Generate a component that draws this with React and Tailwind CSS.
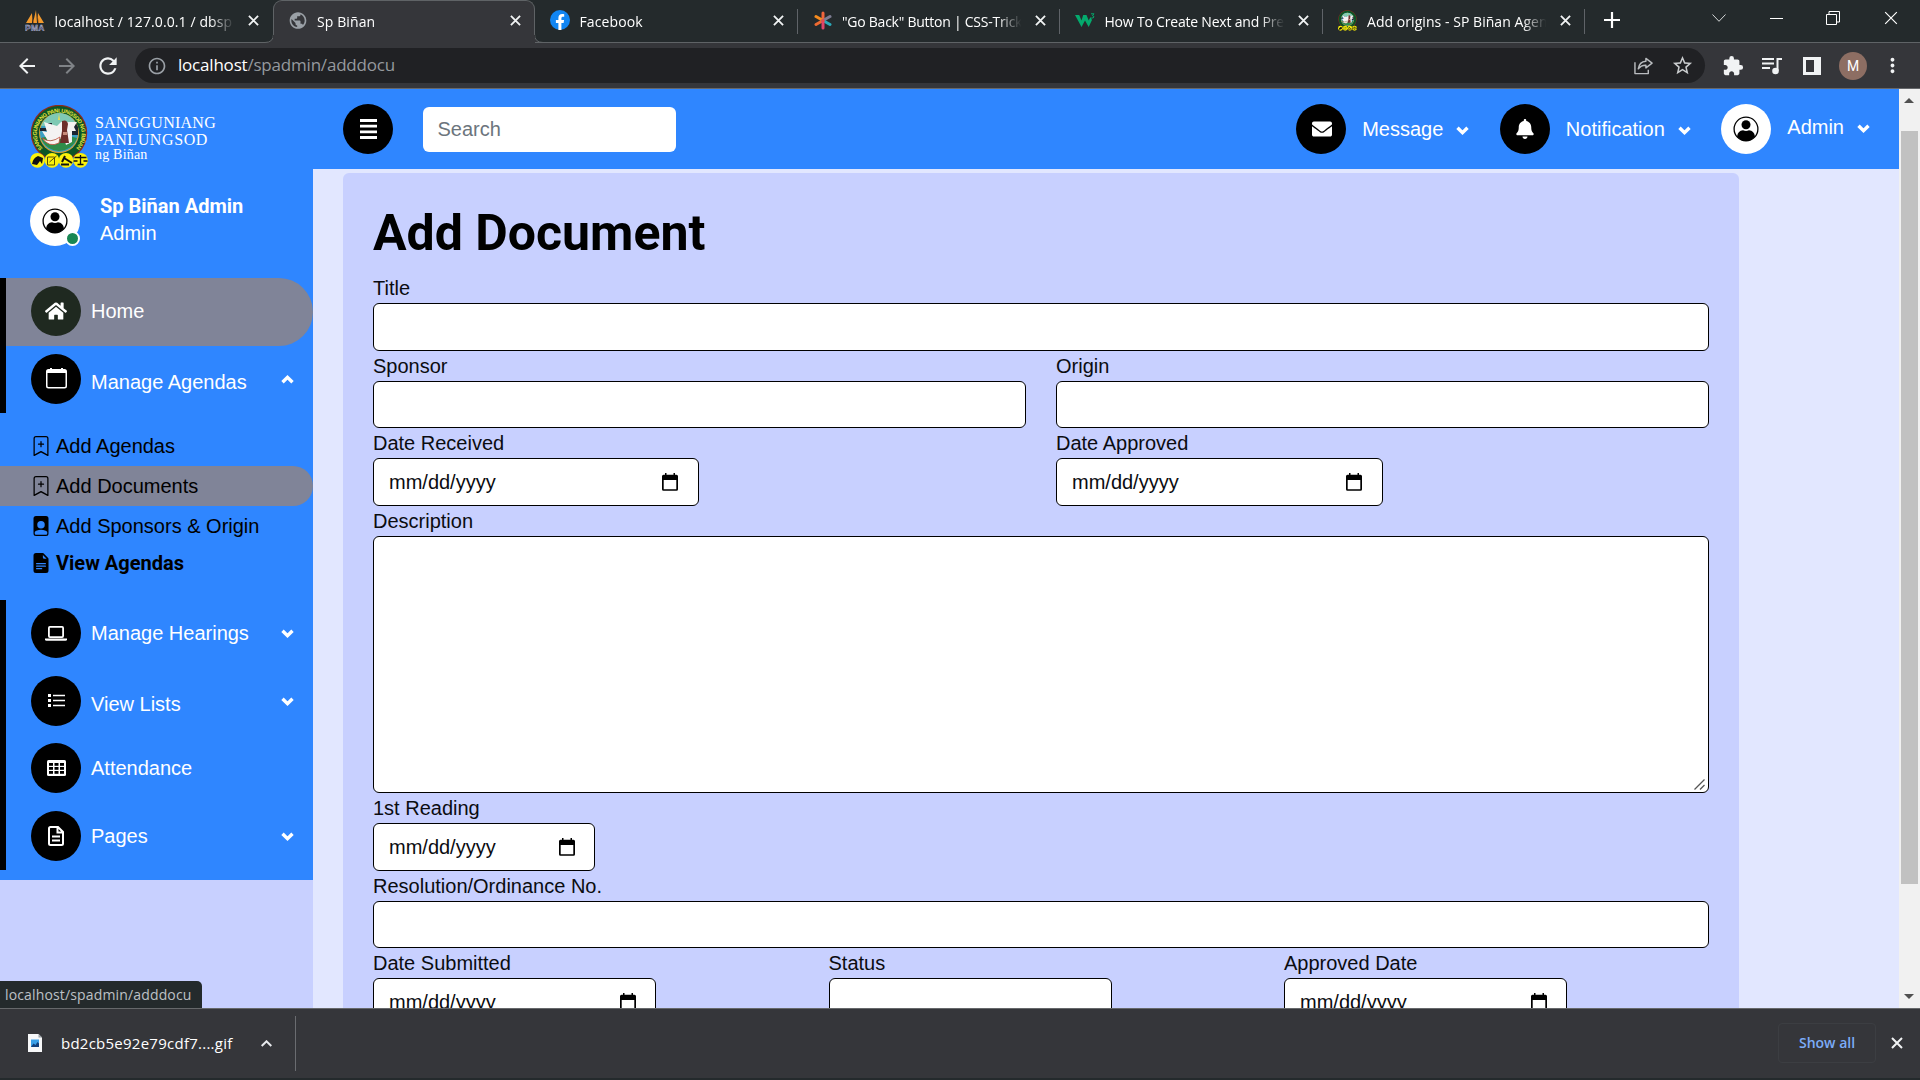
import React from "react";
import { BsBookmarkPlus, BsFilePersonFill, BsFileEarmarkTextFill } from "react-icons/bs";
import { FaHome, FaEnvelope, FaBell } from "react-icons/fa";
import {
  MdArrowBack, MdArrowForward, MdRefresh, MdInfoOutline, MdStarBorder, MdExtension, MdMoreVert, MdPublic,
} from "react-icons/md";

const ui = "font-['Open_Sans','Noto_Sans',sans-serif]";

function Cross({ size = 13, w = 2, className = "" }) {
  return (
    <svg width={size} height={size} viewBox="0 0 12 12" className={"shrink-0 " + className}>
      <path d="M1 1L11 11M11 1L1 11" stroke="currentColor" strokeWidth={w} fill="none" />
    </svg>
  );
}

function Chevron({ up, className = "" }) {
  return (
    <svg width="13" height="9" viewBox="0 0 13 9" className={"shrink-0 " + className}>
      <path d={up ? "M1.500 7.300L6.500 2.400l5 4.900" : "M1.500 1.700l5 4.900 5-4.900"} fill="none" stroke="currentColor" strokeWidth="3.400" />
    </svg>
  );
}

function Seal({ w, h, detail }) {
  return (
    <svg width={w} height={h} viewBox="0 0 58 63" className="shrink-0">
      <circle cx="29" cy="28" r="28.2" fill="#8e2a1c" />
      <circle cx="29" cy="28" r="27" fill="#0c5526" />
      <circle cx="29" cy="28" r="20" fill="#d8a13a" />
      <circle cx="29" cy="28" r="19" fill="#3a9fc4" />
      <path d="M11 21a19 19 0 0 1 36 0z" fill="#7fc9b4" />
      <path d="M10 23h8v-5h4v8h-12zM41 18h5l2 4v8h-8z" fill="#1c2430" />
      <path d="M11 33q18 -6 36 0a19 19 0 0 1 -36 0z" fill="#2f8d4a" />
      <path d="M14 17l13 4 4 -4h16l-3 5 2 4h-4v11l-6 3 -2 -7 -16 3 -6 -10 5 1z" fill="#f4f2f2" />
      <path d="M12 33q8 6 18 -1l-1 6q-10 5 -17 -5z" fill="#f8f4ee" stroke="#bb3a2a" strokeWidth=".7" />
      <path d="M32 16q5 -2 6 3l-1 6 2 13h-9l2 -12z" fill="#6e2f2a" />
      <path d="M33 27h4v3h-4z" fill="#c98b7a" />
      <path d="M29 9l1 6h-2z" fill="#f1e04b" />
      {detail && (
        <>
          <defs>
            <path id="ring" d="M12.8 43.5A22.4 21.4 0 1 1 45.500 43.500" />
          </defs>
          <text fontSize="5.6" fontWeight="700" fill="#e9e33a" className="font-['Liberation_Sans',sans-serif]">
            <textPath href="#ring" textLength="100">SANGGUNIANG PANLUNGSOD NG BIÑAN</textPath>
          </text>
        </>
      )}
      {[7.5, 22, 36, 50.5].map((x) => (
        <circle key={x} cx={x} cy="55.3" r="7.4" fill="#fbf20c" />
      ))}
      <path d="M2 59q1 -6 6 -8l5 2 -1 6 -2 -3 -3 4z" fill="#111" />
      <path d="M17.500 52h7v8h-7zM19.500 57l7 -6" fill="none" stroke="#55500a" />
      <path d="M31 59.500h8M35 51l-3 6M34 53l8 5" fill="none" stroke="#111" strokeWidth="2" />
      <path d="M50.500 50v9M47.500 59.500h6M44.500 52.500h12M43.500 56h4zM53.500 56h4z" fill="none" stroke="#111" strokeWidth="1.3" />
    </svg>
  );
}

const favicons = {
  pma: (
    <svg width="20" height="21" viewBox="0 0 20 21">
      <path d="M1 13L7 3v10zM8 13L11 0l1 13zM13 13V3l6 10z" fill="#f39a2d" />
      <path d="M7 4l1 9h1zM12 2l1 11h1z" fill="#c46a10" />
      <text x="0" y="20.500" fontSize="8.500" fontWeight="700" fill="#4a4c78" stroke="#c3c4dc" strokeWidth=".4" textLength="19.500" className="font-['Liberation_Sans',sans-serif]">PMA</text>
    </svg>
  ),
  fb: (
    <svg width="20" height="20" viewBox="0 0 20 20">
      <circle cx="10" cy="10" r="10" fill="#1185f2" />
      <path d="M8.400 20v-7H5.900v-3h2.500V7.900c0-2.600 1.500-3.900 3.700-3.900.8 0 1.700.1 2.100.2v2.500h-1.300c-1.100 0-1.500.7-1.500 1.400V10h2.700l-.5 3h-2.200v7z" fill="#fff" />
    </svg>
  ),
  css: (
    <svg width="18" height="19" viewBox="0 0 18 19" strokeWidth="3" strokeLinecap="round">
      <path d="M9 9.500V2" stroke="#f0653c" />
      <path d="M9 9.500L2 5.500" stroke="#f58b1e" />
      <path d="M9 9.500L2 13.500" stroke="#ee6a31" />
      <path d="M9 9.500L16 5.500" stroke="#7d7c92" />
      <path d="M9 9.500L16 13.500" stroke="#2ba8b8" />
      <path d="M9 9.500V17" stroke="#e0436b" />
      <circle cx="9" cy="9.500" r="1.500" fill="#e84a4a" stroke="none" />
    </svg>
  ),
  w3: (
    <svg width="20" height="14" viewBox="0 0 20 14">
      <path d="M0 2h4.200l2.300 5.500L8.200 2h3.300l2.200 5.500L15.500 4l1.500 3-3.300 7L10 7.500 6.500 14z" fill="#04aa6d" />
      <path d="M16 .8h3L17.400 2.600q1.600 .2 1.500 1.400 -.2 1.400 -2.700 1" fill="none" stroke="#04aa6d" />
    </svg>
  ),
};

function Tab({ icon, title, tracking, active, divider }) {
  return (
    <div
      className={
        "relative flex h-[43px] w-[262.5px] shrink-0 items-center " +
        (active
          ? "rounded-t-[9px] border border-b-0 border-[#5f6366] bg-[#35363a] pb-[4px] pl-[14px]"
          : "border-b border-[#5f6366] pb-[2px] pl-[15px]")
      }
    >
      <div className="flex w-5 shrink-0 justify-center">{icon}</div>
      <div className="ml-[9.5px] w-[183px] overflow-hidden mask-r-from-85% mask-r-to-98%">
        <span className={"whitespace-nowrap text-[14px] leading-5 text-white " + tracking}>{title}</span>
      </div>
      <Cross size={11} className="ml-[10px] text-[#f1f3f4]" />
      {divider && <div className="absolute top-[9px] right-0 h-[25px] w-px bg-[#5f6368]" />}
      {active && (
        <>
          <svg width="9" height="9" viewBox="0 0 9 9" className="absolute bottom-0 -left-[9px]">
            <path d="M0 9V8.500Q8.500 8.500 8.500 0H9v9z" fill="#35363a" />
            <path d="M0 8.500Q8.500 8.500 8.500 0" fill="none" stroke="#5f6366" />
          </svg>
          <svg width="9" height="9" viewBox="0 0 9 9" className="absolute -right-[9px] bottom-0">
            <path d="M9 9V8.500Q.5 8.500 .5 0H0v9z" fill="#35363a" />
            <path d="M9 8.500Q.5 8.500 .5 0" fill="none" stroke="#5f6366" />
          </svg>
          <div className="absolute bottom-0 -left-px h-2 w-px bg-[#35363a]" />
          <div className="absolute -right-px bottom-0 h-2 w-px bg-[#35363a]" />
        </>
      )}
    </div>
  );
}

function Share() {
  return (
    <svg width="20" height="18" viewBox="0 0 21 18" fill="none" stroke="#b9bcbf" strokeWidth="1.500" strokeLinejoin="round">
      <path d="M1 5v12h14v-4" />
      <path d="M12.500 1l6.500 5-6.500 5V8.200Q7.500 8 4.500 12 5.500 4.500 12.500 4z" />
    </svg>
  );
}

function Browser() {
  return (
    <div className={ui}>
      <div className="flex h-[43px] bg-[#242a2c]">
        <div className="w-[10px] border-b border-[#5f6366]" />
        <Tab icon={favicons.pma} title="localhost / 127.0.0.1 / dbsp" tracking="tracking-[0.1px]" />
        <Tab icon={<MdPublic size={21} color="#9aa0a6" />} title="Sp Biñan" tracking="tracking-[0.1px]" active />
        <Tab icon={favicons.fb} title="Facebook" tracking="tracking-[0.1px]" divider />
        <Tab icon={favicons.css} title={'"Go Back" Button | CSS-Tricks'} tracking="tracking-[-0.25px]" divider />
        <Tab icon={favicons.w3} title="How To Create Next and Previous" tracking="tracking-[-0.2px]" divider />
        <Tab icon={<Seal w={19} h={21} />} title="Add origins - SP Biñan Agenda" tracking="tracking-[0.05px]" divider />
        <div className="flex flex-1 items-center border-b border-[#5f6366] pb-[2px] pl-[19px]">
          <svg width="16" height="16" viewBox="0 0 16 16" stroke="#fff" strokeWidth="2.200"><path d="M8 0v16M0 8h16" /></svg>
          <div className="mb-1 ml-[92px] flex flex-1 items-center justify-between pr-[22px]">
            <svg width="14" height="8" viewBox="0 0 14 8" fill="none" stroke="#d5d7d8"><path d="M.5 .5L7 7.300 13.500 .5" /></svg>
            <div className="h-px w-[13px] bg-white" />
            <svg width="14" height="14" viewBox="0 0 14 14" fill="none" stroke="#fff"><path d="M.5 3.500h10v10H.5zM3 3.500V.5h10.500V11H10.500" /></svg>
            <Cross size={14} w={1} className="text-white" />
          </div>
        </div>
      </div>
      <div className="flex h-[46px] items-center border-b border-[#66686b] bg-[#35363a] pl-[15px] text-[#f1f3f4]">
        <MdArrowBack size={24} />
        <MdArrowForward size={24} className="ml-4 text-[#808387]" />
        <MdRefresh size={26} className="ml-4" />
        <div className="ml-[14px] flex h-[35px] w-[1570px] items-center rounded-full bg-[#202124] pl-3">
          <MdInfoOutline size={20} className="text-[#9aa0a6]" />
          <div className="ml-[11px] pb-0.5 text-[17px] tracking-[-0.2px] text-white">
            localhost<span className="text-[#95999e]">/spadmin/adddocu</span>
          </div>
          <div className="mr-[11px] ml-auto flex items-center gap-[17px]">
            <Share />
            <MdStarBorder size={23} className="text-[#c9ccce]" />
          </div>
        </div>
        <MdExtension size={22} className="ml-[17px]" />
        <svg width="20" height="18" viewBox="0 0 20 18" className="ml-[18px]" fill="none" stroke="currentColor" strokeWidth="2">
          <path d="M0 2h12M0 6.500h12M0 11h8M15.500 14V2H20" /><circle cx="13.500" cy="14" r="2.300" fill="currentColor" />
        </svg>
        <svg width="18" height="18" viewBox="0 0 18 18" className="ml-[21px]"><path fill="currentColor" fillRule="evenodd" d="M0 0h18v18H0zM3 3v12h8V3z" /></svg>
        <div className="ml-[18px] flex size-7 items-center justify-center rounded-full bg-[#8d6e63] font-['Roboto',sans-serif] text-sm text-white">M</div>
        <MdMoreVert size={23} className="ml-[14px]" />
      </div>
    </div>
  );
}

function Round({ children, className = "bg-black text-white" }) {
  return <div className={"flex size-[50px] shrink-0 items-center justify-center rounded-full " + className}>{children}</div>;
}

function PersonGlyph() {
  return (
    <svg width="26" height="26" viewBox="0 0 26 26">
      <circle cx="13" cy="13" r="11.900" fill="none" stroke="#000" strokeWidth="1.300" />
      <circle cx="13" cy="8.700" r="4.500" />
      <path d="M4 20.500Q5 14.500 10 14.300q3 1.500 6 0 5 .2 6 6.200Q18.500 25 13 25t-9-4.500z" />
    </svg>
  );
}

function MenuGlyph() {
  return (
    <svg width="17" height="20" viewBox="0 0 17 20" fill="#fff">
      <path d="M0 0h17v3H0zM0 5.700h17v2.800H0zM0 11.400h17v2.800H0zM0 17h17v3H0z" />
    </svg>
  );
}

function CalendarGlyph() {
  return (
    <svg width="21" height="21" viewBox="0 0 21 21" className="ml-px">
      <path d="M4 0h2v1h9V0h2v1h1.500Q21 1 21 3.500v14.500q0 2.500-2.500 2.500h-16Q0 20.500 0 18V3.500Q0 1 2.500 1H4zM1.500 5v13q0 1 1 1h16q1 0 1-1V5z" fill="#fff" fillRule="evenodd" />
    </svg>
  );
}

function LaptopGlyph() {
  return (
    <svg width="22" height="15" viewBox="0 0 22 15">
      <rect x="3.900" y=".9" width="14.200" height="10.200" rx="1" fill="none" stroke="#fff" strokeWidth="1.800" />
      <path d="M0 12.500h22v.8q0 1.500-1.500 1.500h-19Q0 14.800 0 13.300z" fill="#fff" />
    </svg>
  );
}

function ListGlyph() {
  return (
    <svg width="17" height="13" viewBox="0 0 17 13" fill="#fff">
      <path d="M0 0h3v3H0zM0 5h3v3H0zM0 10h3v3H0zM5 .8h12v1.400H5zM5 5.800h12v1.400H5zM5 10.800h12v1.400H5z" />
    </svg>
  );
}

function TableGlyph() {
  return (
    <svg width="19" height="16" viewBox="0 0 19 16">
      <rect width="19" height="16" rx="1.500" fill="#fff" />
      {[3, 7, 11].map((y) => [2, 7.500, 13].map((x) => <rect key={x + "-" + y} x={x} y={y} width="4" height="2.800" fill="#000" />))}
    </svg>
  );
}

function PageGlyph() {
  return (
    <svg width="16" height="20" viewBox="0 0 16 20" fill="none" stroke="#fff" strokeWidth="2">
      <path d="M2.500 1h7.500l5 5v11.500q0 1.500-1.500 1.500h-11Q1 19 1 17.500v-15Q1 1 2.500 1zM9.500 1v5.500H15M4 10.500h8M4 14.500h8" />
    </svg>
  );
}

function NavRow({ icon, label, shift = "", chevron, className = "pt-2", round }) {
  return (
    <div className={"flex h-[67.5px] items-start border-l-[6px] border-black pr-[19px] pl-[25px] text-white " + className}>
      <Round className={round}>{icon}</Round>
      <span className={"ml-[10px] flex-1 leading-[50px] " + shift}>{label}</span>
      {chevron && <Chevron up={chevron === "up"} className="mt-[21px]" />}
    </div>
  );
}

function SubRow({ icon, children, className = "" }) {
  return (
    <div className={"flex h-10 items-center pl-[31px] text-black " + className}>
      {icon}
      <span className="ml-[5px]">{children}</span>
    </div>
  );
}

function Sidebar() {
  return (
    <aside className="w-[313px] shrink-0 bg-[#c8d0ff]">
      <div className="h-[791px] bg-[#2f86ff]">
        <div className="flex h-[79px] pt-4 pl-[30px]">
          <Seal w={58} h={63} detail />
          <div className="mt-[9px] ml-[7px] font-['Liberation_Serif',serif] text-[16px] leading-[17px] text-white">
            <div className="tracking-[0.25px]">SANGGUNIANG</div>
            <div className="tracking-[0.6px]">PANLUNGSOD</div>
            <div className="text-[14px] leading-[13px] tracking-[0.2px]">ng Biñan</div>
          </div>
        </div>
        <div className="mt-7 flex h-[50px] pl-[30px]">
          <div className="relative">
            <Round className="bg-white text-black"><PersonGlyph /></Round>
            <div className="absolute right-0 bottom-0 size-[15px] rounded-full border-2 border-white bg-[#198754]" />
          </div>
          <div className="-mt-[3px] ml-5 text-white">
            <div className="font-['Roboto',sans-serif] leading-[27px] font-bold">Sp Biñan Admin</div>
            <div className="leading-[27px]">Admin</div>
          </div>
        </div>
        <div className="mt-8 h-[135px]">
          <NavRow className="rounded-r-full bg-[#808498] pt-2" round="bg-[#1f2920] text-white" icon={<FaHome size={22} />} label="Home" />
          <NavRow icon={<CalendarGlyph />} label="Manage Agendas" shift="pt-[3px]" chevron="up" />
        </div>
        <div className="h-[187px] pt-[13px]">
          <SubRow icon={<BsBookmarkPlus size={20} />}>Add Agendas</SubRow>
          <SubRow icon={<BsBookmarkPlus size={20} />} className="rounded-r-full bg-[#808498]">Add Documents</SubRow>
          <SubRow icon={<BsFilePersonFill size={20} />}>Add Sponsors &amp; Origin</SubRow>
          <SubRow icon={<BsFileEarmarkTextFill size={20} />} className="-mt-[3px] font-['Roboto',sans-serif] font-bold">View Agendas</SubRow>
        </div>
        <NavRow icon={<LaptopGlyph />} label="Manage Hearings" chevron="down" />
        <NavRow icon={<ListGlyph />} label="View Lists" shift="pt-[3px]" chevron="down" />
        <NavRow icon={<TableGlyph />} label="Attendance" />
        <NavRow icon={<PageGlyph />} label="Pages" chevron="down" />
      </div>
    </aside>
  );
}

function TopItem({ label, className = "", round, children, up = "" }) {
  return (
    <div className={"flex items-center " + className}>
      <Round className={round}>{children}</Round>
      <div className={"ml-4 flex items-center " + up}>
        <span>{label}</span>
        <Chevron className="mt-[2px] ml-[13px]" />
      </div>
    </div>
  );
}

function Box({ className = "" }) {
  return <div className={"rounded-[6px] border border-black bg-white " + className} />;
}

function DateBox({ className = "pr-[19px]" }) {
  return (
    <div className={"flex h-12 items-center justify-between rounded-[6px] border border-black bg-white pl-[15px] " + className}>
      <span>mm/dd/yyyy</span>
      <svg width="16" height="18" viewBox="0 0 16 18">
        <path d="M3 0h1.500v1.800h7V0H13v1.800h1.500Q16 1.800 16 3.300v13q0 1.500-1.500 1.500h-13Q0 17.800 0 16.300v-13Q0 1.800 1.500 1.800H3zM1.700 7v9.200h12.600V7z" fill="#000" fillRule="evenodd" />
      </svg>
    </div>
  );
}

function Field({ label, children, className = "" }) {
  return (
    <div className={className}>
      <div className="h-[30px] leading-[30px]">{label}</div>
      {children}
    </div>
  );
}

function Form() {
  return (
    <section className="mt-1 ml-[30px] h-[900px] w-[1396px] rounded-[6px] bg-[#c8d0ff] px-[30px] text-[#0b0c10]">
      <h1 className="h-[100px] pt-[30px] font-['Roboto',sans-serif] text-[50px] leading-[60px] font-bold text-black">Add Document</h1>
      <Field label="Title"><Box className="h-12" /></Field>
      <div className="grid grid-cols-2 gap-x-[30px]">
        <Field label="Sponsor"><Box className="h-[47px]" /></Field>
        <Field label="Origin"><Box className="h-[47px]" /></Field>
        <Field label="Date Received"><DateBox className="w-[326px] pr-5" /></Field>
        <Field label="Date Approved"><DateBox className="w-[327px] pr-5" /></Field>
      </div>
      <Field label="Description">
        <div className="flex h-[257px] items-end justify-end rounded-[6px] border border-black bg-white pr-[3px] pb-[2px]">
          <svg width="11" height="11" viewBox="0 0 11 11" stroke="#555" strokeWidth="1.300"><path d="M.5 10.500l10-10M6 10.500l4.500-4.500" /></svg>
        </div>
      </Field>
      <Field label="1st Reading"><DateBox className="w-[222px] pr-[19px]" /></Field>
      <Field label="Resolution/Ordinance No."><Box className="h-[47px]" /></Field>
      <div className="flex gap-[172.5px]">
        <Field label="Date Submitted" className="w-[283px]"><DateBox /></Field>
        <Field label="Status" className="w-[283px]"><Box className="h-12" /></Field>
        <Field label="Approved Date" className="w-[283px]"><DateBox /></Field>
      </div>
    </section>
  );
}

function Main() {
  return (
    <div className="flex-1 bg-[#e2e7ff]">
      <header className="flex h-20 items-center bg-[#2f86ff] text-white">
        <Round className="ml-[30px] bg-black text-white"><MenuGlyph /></Round>
        <div className="ml-[29.5px] flex h-[45px] w-[253px] items-center rounded-[6px] bg-white pl-[15px] text-[#6c757d]">Search</div>
        <div className="ml-auto flex items-center pr-[29px]">
          <TopItem label="Message" round="bg-black text-white"><FaEnvelope size={20} className="ml-[2px]" /></TopItem>
          <TopItem label="Notification" round="bg-black text-white" className="ml-[30.5px]"><FaBell size={20} /></TopItem>
          <TopItem label="Admin" round="bg-white text-black" className="ml-[30.5px]" up="-mt-[4px]"><PersonGlyph /></TopItem>
        </div>
      </header>
      <Form />
    </div>
  );
}

function Scrollbar() {
  return (
    <div className="flex w-[21px] shrink-0 flex-col items-center bg-[#f1f1f1] pr-px">
      <svg width="10" height="5" viewBox="0 0 10 5" className="mt-[9px]"><path d="M0 5L5 0l5 5z" fill="#505050" /></svg>
      <div className="mt-[28px] h-[753px] w-[17px] bg-[#c1c1c1]" />
      <svg width="10" height="5" viewBox="0 0 10 5" className="mt-auto mb-[9px]"><path d="M0 0l5 5 5-5z" fill="#505050" /></svg>
    </div>
  );
}

function Downloads() {
  return (
    <footer className={"flex h-[72px] items-center border-t border-b-2 border-t-[#66686b] border-b-[#242a2c] bg-[#35363a] pb-px pl-[28px] text-white " + ui}>
      <svg width="14" height="18" viewBox="0 0 14 18">
        <path d="M0 0h10.500L14 3.500V18H0z" fill="#f7f8f9" /><path d="M10.500 0L14 3.500h-3.500z" fill="#9aa0a6" />
        <path d="M3 5.500h8V13H3z" fill="#3aa0e8" /><path d="M3 13l2.500-3.500 2 1.500L9.500 8 11 9.500V13z" fill="#12407c" />
      </svg>
      <span className="ml-[19px] w-[171px] text-[15px] tracking-[0.25px] whitespace-nowrap">bd2cb5e92e79cdf7....gif</span>
      <svg width="11" height="7" viewBox="0 0 11 7" className="ml-[29px]" fill="none" stroke="#e8eaed" strokeWidth="2"><path d="M.7 6L5.500 1.300 10.300 6" /></svg>
      <div className="ml-[23px] h-[55px] w-px bg-[#6a6c70]" />
      <div className="ml-auto flex h-10 w-[98px] items-center justify-center rounded border border-[#3c3e42] text-[14px] font-semibold text-[#7cacf8]">Show all</div>
      <Cross size={12} className="mr-[17px] ml-[15px] text-[#f1f3f4]" />
    </footer>
  );
}

export default function App() {
  return (
    <div className="flex h-[1080px] w-[1920px] flex-col overflow-hidden font-['Liberation_Sans',Arial,sans-serif] text-[20px] leading-[30px]">
      <Browser />
      <div className="relative h-[919px] overflow-hidden">
        <div className="flex h-[919px] overflow-hidden">
          <Sidebar />
          <Main />
          <Scrollbar />
        </div>
        <div className={"absolute bottom-0 left-0 flex h-[27px] w-[202px] items-center rounded-tr-[5px] bg-[#242a2c] pl-[5px] text-[14px] tracking-[0.15px] text-[#bdc1c6] " + ui}>
          localhost/spadmin/adddocu
        </div>
      </div>
      <Downloads />
    </div>
  );
}
